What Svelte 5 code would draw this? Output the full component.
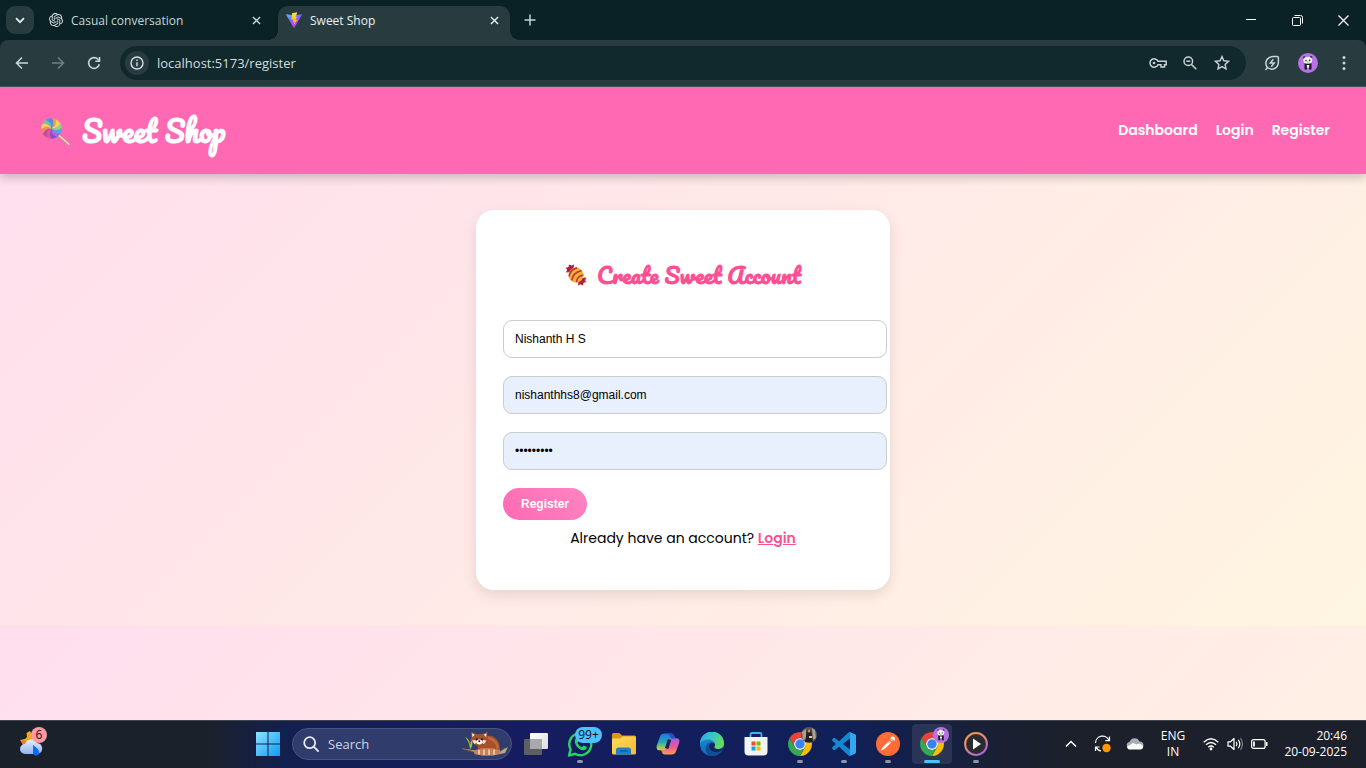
<script>
  let name = $state('Nishanth H S');
  let email = $state('nishanthhs8@gmail.com');
  let password = $state('sweetshop');
  let address = $state('localhost:5173/register');
  let query = $state('');

  const petals = ['#f0a04b', '#f7d65a', '#8fd48a', '#4aa8e8', '#a06be0', '#7d4fd0', '#e0559a', '#c04a9c', '#f08a5a', '#f7cf5a', '#6cc6a0', '#4a90e8'];
  const openai =
    'M22.28 9.82a5.98 5.98 0 0 0-.51-4.91 6.05 6.05 0 0 0-6.51-2.9A6.07 6.07 0 0 0 4.98 4.18a5.98 5.98 0 0 0-4 2.9 6.05 6.05 0 0 0 .74 7.1 5.98 5.98 0 0 0 .51 4.91 6.05 6.05 0 0 0 6.52 2.9A5.98 5.98 0 0 0 13.26 24a6.06 6.06 0 0 0 5.77-4.21 5.99 5.99 0 0 0 4-2.9 6.06 6.06 0 0 0-.75-7.07zm-9.02 12.61a4.48 4.48 0 0 1-2.88-1.04l.14-.08 4.78-2.76a.8.8 0 0 0 .4-.68v-6.74l2.02 1.17a.07.07 0 0 1 .04.05v5.58a4.5 4.5 0 0 1-4.5 4.5zM3.6 18.3a4.47 4.47 0 0 1-.53-3.01l.14.08 4.78 2.76a.77.77 0 0 0 .78 0l5.85-3.37v2.33a.08.08 0 0 1-.03.06L9.74 19.95A4.5 4.5 0 0 1 3.6 18.3zM2.34 7.9a4.49 4.49 0 0 1 2.37-1.98V11.6a.77.77 0 0 0 .38.68l5.82 3.35-2.02 1.17a.08.08 0 0 1-.07 0l-4.83-2.79A4.5 4.5 0 0 1 2.34 7.87zm16.6 3.85L13.1 8.36l2.02-1.16a.08.08 0 0 1 .07 0l4.83 2.79a4.49 4.49 0 0 1-.68 8.1v-5.67a.79.79 0 0 0-.4-.67zm2-3.02-.14-.09-4.77-2.78a.78.78 0 0 0-.79 0L9.41 9.23V6.9a.07.07 0 0 1 .03-.06l4.83-2.79a4.5 4.5 0 0 1 6.68 4.66zM8.31 12.86l-2.02-1.16a.08.08 0 0 1-.04-.06V6.07a4.5 4.5 0 0 1 7.37-3.45l-.14.08L8.7 5.46a.79.79 0 0 0-.39.68zm1.1-2.36 2.6-1.5 2.6 1.5v3l-2.6 1.5-2.6-1.5Z';
</script>

{#snippet chrome()}
  <svg width="24" height="24" viewBox="0 0 48 48">
    <circle cx="24" cy="24" r="12" fill="#fff" />
    <path fill="#ea4335" d="M24 12H44.78a24 24 0 0 0-41.56 0L13.61 30A11.99 11.99 0 0 1 24 12Z" />
    <path fill="#fbbc04" d="M34.39 30 24 48A24 24 0 0 0 44.78 12H24A11.99 11.99 0 0 1 34.39 30Z" />
    <path fill="#34a853" d="M13.61 30 3.22 12A24 24 0 0 0 24 48L34.39 30A11.99 11.99 0 0 1 13.61 30Z" />
    <circle cx="24" cy="24" r="9.500" fill="#3b82f0" />
  </svg>
{/snippet}

{#snippet panda(size)}
  <svg width={size} height={size} viewBox="0 0 20 20">
    <circle cx="10" cy="10" r="10" fill="#b872e8" />
    <path d="M6.500 10.500q3.500-1.500 7 0v6h-2.500v-2.500h-2v2.500h-2.500z" fill="#1b1b20" />
    <path d="M8.800 12h2.400v2.500h-2.400z" fill="#f4f4f4" />
    <circle cx="6.300" cy="4.400" r="1.200" fill="#333" /><circle cx="13.200" cy="4.100" r="1.200" fill="#333" />
    <ellipse cx="9.800" cy="7.200" rx="4.400" ry="3.500" fill="#f2f2f2" />
    <circle cx="8" cy="7.600" r=".8" fill="#333" /><circle cx="11.700" cy="7.400" r=".8" fill="#333" />
    <circle cx="9.900" cy="9" r=".5" fill="#333" />
  </svg>
{/snippet}

{#snippet cross(size)}
  <svg width={size} height={size} viewBox="0 0 10 10" fill="none" stroke="currentColor" stroke-width="1.500"><path d="M1 1l8 8M9 1L1 9" /></svg>
{/snippet}

<div class="screen">
  <div class="tabstrip">
    <button class="tabsearch" aria-label="Search tabs">
      <svg width="10" height="7" viewBox="0 0 10 7" fill="none" stroke="#e3eeee" stroke-width="1.800"><path d="M1 1.200l4 4 4-4" /></svg>
    </button>
    <div class="tab">
      <svg width="14" height="14" viewBox="0 0 24 24" fill="#dce6e6"><path d={openai} /></svg>
      <span>Casual conversation</span>
      <button aria-label="Close tab">{@render cross(9)}</button>
    </div>
    <div class="tab active">
      <svg width="16" height="16" viewBox="0 0 32 32">
        <defs>
          <linearGradient id="vite" x1="0" y1="0" x2=".6" y2="1"><stop stop-color="#41d1ff" /><stop offset=".4" stop-color="#7a6cff" /><stop offset="1" stop-color="#c834fe" /></linearGradient>
          <linearGradient id="bolt" x1="0" y1="0" x2="0" y2="1"><stop stop-color="#ffe04a" /><stop offset="1" stop-color="#ffa800" /></linearGradient>
        </defs>
        <path d="M1 4.500 15 7l16-2.500q1 .3.500 1.500L17 31q-1 1.500-2 0L.5 6Q0 4.800 1 4.500z" fill="url(#vite)" />
        <path d="M22.500.5 12 2.500l-1 13 4-.8-1.500 6 3.500-1-2 7.500L23 15l-4 .8 3-6.300-2.500.5z" fill="url(#bolt)" />
      </svg>
      <span>Sweet Shop</span>
      <button aria-label="Close tab">{@render cross(9)}</button>
    </div>
    <button class="newtab" aria-label="New tab">
      <svg width="12" height="12" viewBox="0 0 12 12" fill="none" stroke="#c3d3d4" stroke-width="1.500"><path d="M6 .5v11M.5 6h11" /></svg>
    </button>
    <div class="window">
      <button aria-label="Minimise"><svg width="10" height="10" viewBox="0 0 10 10" stroke="#fff"><path d="M0 4.500h10" /></svg></button>
      <button aria-label="Restore"><svg width="11" height="11" viewBox="0 0 11 11" fill="none" stroke="#fff"><rect x=".5" y="2.500" width="8" height="8" rx="1" /><path d="M2.500.5h6a2 2 0 0 1 2 2v6" /></svg></button>
      <button aria-label="Close"><svg width="11" height="11" viewBox="0 0 11 11" stroke="#fff" stroke-width="1.200"><path d="M.5.5l10 10M10.500.5l-10 10" /></svg></button>
    </div>
  </div>

  <div class="toolwrap">
    <div class="toolbar">
      <button aria-label="Back"><svg width="16" height="16" viewBox="0 0 16 16" fill="none" stroke="#c6d6d8" stroke-width="1.600"><path d="M14 8H3M8 2.500 2.500 8 8 13.500" /></svg></button>
      <button aria-label="Forward"><svg width="16" height="16" viewBox="0 0 16 16" fill="none" stroke="#6d7f83" stroke-width="1.600"><path d="M2 8h11M8 2.500 13.500 8 8 13.500" /></svg></button>
      <button aria-label="Reload"><svg width="16" height="16" viewBox="0 0 16 16" fill="none" stroke="#c6d6d8" stroke-width="1.600"><path d="M13.300 9.300A5.400 5.400 0 1 1 12 4.300L13.500 6" /><path d="M13.500 2v4.200H9.300" /></svg></button>
      <div class="omnibox">
        <button class="info" aria-label="Site information"><svg width="14" height="14" viewBox="0 0 14 14" fill="none" stroke="#d5dfe0" stroke-width="1.400"><circle cx="7" cy="7" r="6" /><path d="M7 6.200v4M7 3.600v1.400" /></svg></button>
        <input aria-label="Address" bind:value={address} spellcheck="false" />
        <button aria-label="Passwords"><svg width="18" height="12" viewBox="0 0 18 12" fill="none" stroke="#c6d3d4" stroke-width="1.500"><path d="M9 4.300A4.200 4.200 0 1 0 9 7.700h3V10h3.500V7.700h1.700V4.300z" /><circle cx="5" cy="6" r="1.300" fill="#c6d3d4" stroke="none" /></svg></button>
        <button aria-label="Zoom"><svg width="14" height="14" viewBox="0 0 14 14" fill="none" stroke="#c6d3d4" stroke-width="1.500"><circle cx="5.300" cy="5.300" r="4.300" /><path d="M8.500 8.500 13.300 13.300M3.300 5.300h4" /></svg></button>
        <button aria-label="Bookmark"><svg width="16" height="16" viewBox="0 0 16 16" fill="none" stroke="#c6d3d4" stroke-width="1.400"><path d="M8 1.600l1.900 4.200 4.600.5-3.400 3.100.9 4.500L8 11.600l-4 2.300.9-4.500L1.500 6.300l4.600-.5z" /></svg></button>
      </div>
      <button aria-label="Performance"><svg width="16" height="16" viewBox="0 0 16 16" fill="none" stroke="#c6d6d8" stroke-width="1.500"><path d="M1.500 15 3.500 12.500M3.500 12.500C-.2 8 2.800 1.700 9 1.600h4.200q1.200 0 1.200 1.200V7c0 6.500-6.500 9-10.900 5.500z" /><path d="M9.300 4.300 6.300 8h3.900L7.200 11.700" /></svg></button>
      <button aria-label="Profile">{@render panda(20)}</button>
      <button aria-label="Menu"><svg width="4" height="16" viewBox="0 0 4 16" fill="#c6d6d8"><circle cx="2" cy="2.500" r="1.500" /><circle cx="2" cy="8" r="1.500" /><circle cx="2" cy="13.500" r="1.500" /></svg></button>
    </div>
  </div>

  <div class="page">
    <header>
      <h1>
        <svg width="30" height="32" viewBox="-1 -3 30 32">
          <path d="M18 18l10 8.700" stroke="#b9957c" stroke-width="2.600" stroke-linecap="round" />
          <path d="M18 17.500l10 8.700" stroke="#f3dcc0" stroke-width="1.500" stroke-linecap="round" />
          {#each petals as fill, i}
            <path d="M10.500 10.500Q14.500 6 10.500.6Q13.500.6 15.700 2Q16.500 6 10.500 10.500z" {fill} stroke={fill} stroke-width=".6" transform="rotate({i * 30} 10.500 10.500)" />
          {/each}
        </svg>
        Sweet Shop
      </h1>
      <nav>
        <a href="#dashboard">Dashboard</a>
        <a href="#login">Login</a>
        <a href="#register">Register</a>
      </nav>
    </header>
    <main>
      <section class="card">
        <h2>
          <svg width="22" height="22" viewBox="0 0 22 22">
            <path d="M6 8 1 8.500 2.200 5.500.5 4 3.500 3 4 .5 6.500 1.500 9 .5 8.500 5z" fill="#b01e44" />
            <path d="M16 14l5.500-.5-1.500 3 1.500 1.500-3 .8-.6 2.700-2.400-1.200-2.500 1.200.5-5z" fill="#b01e44" />
            <circle cx="11" cy="11" r="7.500" fill="#f0b52e" />
            <path d="M4.200 12.500Q5 5.500 12 3.900M7 16.500Q7.500 8.500 16.500 6.800M11.500 18.300Q11.500 12.500 18.400 11" fill="none" stroke="#c92d4c" stroke-width="1.600" />
          </svg>
          Create Sweet Account
        </h2>
        <form onsubmit={(e) => e.preventDefault()}>
          <input type="text" aria-label="Name" bind:value={name} />
          <input class="filled" type="email" aria-label="Email" bind:value={email} />
          <input class="filled" type="password" aria-label="Password" bind:value={password} />
          <button type="submit">Register</button>
        </form>
        <p>Already have an account? <a href="#login">Login</a></p>
      </section>
    </main>
  </div>

  <footer class="taskbar">
    <div class="widgets">
      <button aria-label="Weather">
        <svg width="26" height="26" viewBox="0 0 26 26">
          <defs><linearGradient id="cloud" x1="0" y1="0" x2="0" y2="1"><stop stop-color="#e6efff" /><stop offset="1" stop-color="#91b4ee" /></linearGradient></defs>
          <path d="M11 0l3 5 6 2-5 8-8-1-6-5 5-1 2-2-.5-4z" fill="#f5a623" /><path d="M1 9l6 1 5 3-8 1z" fill="#f07c1a" />
          <path d="M6 23a5 5 0 0 1 0-10 6.500 6.500 0 0 1 12-1 5.600 5.600 0 0 1 1 11z" fill="url(#cloud)" />
          <path d="M14 14q6 4 6 7a3 3 0 0 1-6 1z" fill="#0a6cff" />
        </svg>
        <span class="badge alert">6</span>
      </button>
    </div>

    <div class="apps">
      <button aria-label="Start">
        <svg width="24" height="24" viewBox="0 0 24 24">
          <defs><linearGradient id="win" x1="0" y1="0" x2="1" y2="1"><stop stop-color="#8fe3ff" /><stop offset="1" stop-color="#0c9bf5" /></linearGradient></defs>
          <path fill="url(#win)" d="M0 0h11.500v11.500H0zM12.500 0H24v11.500H12.500zM0 12.500h11.500V24H0zM12.500 12.500H24V24H12.500z" />
        </svg>
      </button>
      <label class="search">
        <svg width="16" height="16" viewBox="0 0 16 16" fill="none" stroke="#e4e9f4" stroke-width="1.800"><circle cx="6.700" cy="6.700" r="5.500" /><path d="M10.700 10.700 15 15" stroke-linecap="round" /></svg>
        <input placeholder="Search" aria-label="Search" bind:value={query} />
        <svg width="48" height="26" viewBox="0 0 48 26">
          <path d="M1 17.500l14 2 20 3 12-6.500-3 6-12 2.500H20l-7-4z" fill="#bca78c" />
          <path d="M1 17.500l15 4M44 17l-8 6" stroke="#8c7058" fill="none" />
          <path d="M9 17.500Q8 10 4 6 9 8 9 14L10.500 7q2 6-.5 10.500z" fill="#a4c037" />
          <path d="M17 18Q15 7 24 5.500c9-3 15 4 15 14H18z" fill="#a8502b" />
          <path d="M27 6.500q9 3 10 11" fill="none" stroke="#c2683d" stroke-width="2.500" />
          <path d="M13 19.500q12-4.500 26-.5l.5 3Q27 25.500 15 23.500q-3-1-2-4z" fill="#c98059" />
          <path d="M18 19v4.500M23 18.500v5.500M28 18.500v5.500M33 18.500v5" stroke="#e9c9ab" stroke-width="1.800" />
          <path d="M10 1l5 2h6.500l5-2-.5 6 1 2-3.500 4.500q-5 2.500-10 0L9.500 9l1-2z" fill="#a3502c" />
          <path d="M11 2.200l2.800 1.500-2.500 2.500zM25.500 2.200l-2.800 1.500 2.500 2.500z" fill="#f4e4d2" />
          <path d="M11 9.500l3.500-.5 1 3-2 1zM25.500 9.500 22 9l-1 3 2 1z" fill="#f4e4d2" />
          <ellipse cx="18.300" cy="11" rx="3" ry="2.400" fill="#fff" />
          <circle cx="15.800" cy="8.200" r="1" fill="#17110f" /><circle cx="20.800" cy="8.200" r="1" fill="#17110f" /><circle cx="18.300" cy="10.200" r="1" fill="#17110f" />
        </svg>
      </label>
      <button aria-label="Task view">
        <svg width="24" height="24" viewBox="0 0 24 24">
          <defs><linearGradient id="tv" x1="0" y1="0" x2="1" y2="1"><stop stop-color="#fff" /><stop offset="1" stop-color="#dcdcdc" /></linearGradient></defs>
          <rect x="6" y="1" width="18" height="16" rx="1" fill="url(#tv)" /><rect x="0" y="7" width="18" height="16" rx="1" fill="#666" fill-opacity=".9" /><path d="M6 7h12v10H6z" fill="#a9a9a9" />
        </svg>
      </button>
      <button class="running" aria-label="WhatsApp">
        <svg width="26" height="26" viewBox="0 0 26 26" fill="none">
          <path d="M2 24.500 3.600 18.500A11 11 0 1 1 7.800 22.800z" stroke="#25d366" stroke-width="2.400" stroke-linejoin="round" />
          <path d="M8 8.500c1-2 2.500-1.500 2.800-.5l.9 2.200-1.300 1.800q1.500 3 4.600 4.200l1.500-1.800 3 1.400c.7.300.3 3-2.500 3.500-4 .5-10.500-5-9-10.800z" fill="#25d366" />
        </svg>
        <span class="badge count">99+</span>
      </button>
      <button aria-label="File Explorer">
        <svg width="24" height="24" viewBox="0 0 24 24">
          <defs><linearGradient id="fold" x1="0" y1="0" x2="1" y2="1"><stop stop-color="#ffdc63" /><stop offset="1" stop-color="#f9b82c" /></linearGradient></defs>
          <path d="M0 2.500Q0 1 1.500 1h6L10 3.500h12.500Q24 3.500 24 5v6H0z" fill="#d99a10" />
          <path d="M0 6.500h8l2.500-2H23a1 1 0 0 1 1 1V21a1.500 1.500 0 0 1-1.500 1.500h-21A1.500 1.500 0 0 1 0 21z" fill="url(#fold)" />
          <path d="M4 22.500V18a2.500 2.500 0 0 1 2.500-2.500h10A2.500 2.500 0 0 1 19 18v4.500z" fill="#1f80c9" /><path d="M8 19h7.500" stroke="#0b5f9f" stroke-width="1.500" />
        </svg>
      </button>
      <button aria-label="Copilot">
        <svg width="24" height="24" viewBox="0 0 24 24">
          <defs>
            <linearGradient id="cpa" x1="0" y1="0" x2="0" y2="1"><stop stop-color="#2474e8" /><stop offset=".5" stop-color="#23a8b8" /><stop offset="1" stop-color="#d8d43a" /></linearGradient>
            <linearGradient id="cpb" x1="0" y1="0" x2="0" y2="1"><stop stop-color="#a45bf0" /><stop offset=".55" stop-color="#f0588e" /><stop offset="1" stop-color="#ffa04a" /></linearGradient>
          </defs>
          <path d="M8.500 1.500H15q2.500 0 3.200 2.500l.8 2.500h-3q-2 0-2.800 2.500L11 16q-.8 2.300-3 2.300H3.500C.8 18.300.2 16 .8 13.500L4 4.500q1-3 4.500-3z" fill="url(#cpa)" />
          <path d="M15.500 22.500H9q-2.500 0-3.200-2.500L5 17.800h3q2 0 2.800-2.500L13 8.500q.8-2.300 3-2.300h4.500c2.700 0 3.300 2.300 2.700 4.500L20 19.500q-1 3-4.500 3z" fill="url(#cpb)" />
          <path d="M13.600 7.500 10.600 16.500" stroke="#15235c" stroke-width="3.500" />
          <path d="M12 1.500h3q2.500 0 3.200 2.500l.8 2.500h-3q-1.500-.2-2-2z" fill="#2950bd" />
        </svg>
      </button>
      <button aria-label="Edge">
        <svg width="24" height="24" viewBox="0 0 24 24">
          <defs>
            <linearGradient id="ea" x1="0" y1="0" x2="1" y2=".4"><stop stop-color="#2ca6e0" /><stop offset=".55" stop-color="#37c6c9" /><stop offset="1" stop-color="#62dd59" /></linearGradient>
            <linearGradient id="eb" x1="0" y1="0" x2="0" y2="1"><stop stop-color="#1c91d8" /><stop offset="1" stop-color="#1268b4" /></linearGradient>
          </defs>
          <circle cx="12" cy="12" r="12" fill="url(#eb)" />
          <path d="M0 11.500A12 12 0 0 1 24 11.500c0 4-3.300 5.500-6.500 5.500-3.500 0-4-1.500-3-2.700C17 10 11 7 7.500 7.500 4 7.800 1 9.500 0 11.500z" fill="url(#ea)" />
          <path d="M8.700 13.500C8.500 20 16 22.500 21.500 18.700A12 12 0 0 1 11 24C5 22.500 3.500 14 9.500 10z" fill="#104f96" />
          <path d="M14.800 13.800c-1.500 1.700.5 3.400 3.500 3.400 2 0 4-.7 5-2.200q-.5 2.500-1.800 3.700C16 22 8.500 19.500 9 13.500q.6-3 3-3c2.500.3 3.700 1.800 2.800 3.300z" fill="#13245f" />
        </svg>
      </button>
      <button aria-label="Microsoft Store">
        <svg width="24" height="26" viewBox="0 0 24 26">
          <path d="M6.500 7V3.500Q6.500 2 8 2h8q1.500 0 1.500 1.500V7" fill="none" stroke="#36b5ee" stroke-width="1.800" />
          <path d="M.5 6h23v14.500a4 4 0 0 1-4 4h-15a4 4 0 0 1-4-4z" fill="#f2f3f5" />
          <path d="M7.500 10.500h4v4h-4z" fill="#f25022" /><path d="M12.500 10.500h4v4h-4z" fill="#7fba00" /><path d="M7.500 15.500h4v4h-4z" fill="#00a4ef" /><path d="M12.500 15.500h4v4h-4z" fill="#ffb900" />
        </svg>
      </button>
      <button class="running" aria-label="Chrome">
        {@render chrome()}
        <span class="badge face">
          <svg width="16" height="16" viewBox="0 0 16 16"><circle cx="8" cy="8" r="8" fill="#5f564e" /><path d="M1 5l4-3v10l-3 1zM11 1l3 2 1 8-3 2z" fill="#a8a092" /><path d="M6 3h4l2 12H4z" fill="#211d1e" /><circle cx="8" cy="4" r="1.500" fill="#b88a70" /><path d="M8 9h3v2H8z" fill="#d8ccd0" /></svg>
        </span>
      </button>
      <button class="running" aria-label="Visual Studio Code">
        <svg width="24" height="24" viewBox="0 0 24 24">
          <path fill="#1788cf" d="M23.150 2.590 18.210.21a1.490 1.490 0 0 0-1.700.29l-9.460 8.630-4.120-3.130a1 1 0 0 0-1.280.06L.33 7.260a1 1 0 0 0 0 1.480L3.900 12 .33 15.260a1 1 0 0 0 0 1.480l1.320 1.200a1 1 0 0 0 1.280.06l4.120-3.130 9.460 8.630a1.490 1.490 0 0 0 1.700.29l4.940-2.380A1.500 1.500 0 0 0 24 20.060V3.940a1.500 1.500 0 0 0-.85-1.350zM18 17.450 10.830 12 18 6.550z" />
          <path fill="#35a7f0" d="M18 .2l5.200 2.400q.8.400.8 1.300V20q0 1-.8 1.400L18 23.800z" />
        </svg>
      </button>
      <button class="running" aria-label="Postman">
        <svg width="24" height="24" viewBox="0 0 24 24">
          <circle cx="12" cy="12" r="12" fill="#ff6c37" />
          <path d="M13.500 8.800 7 14.800l-2.200 4 4.200-2 6-6z" fill="#fff" /><circle cx="16.800" cy="6.900" r="2.300" fill="#fff" /><path d="M12 10l2.500 1.500M7 14.800l2 2" stroke="#ff6c37" stroke-width=".6" fill="none" /><path d="M15.500 7.500l2.500 1" stroke="#ff6c37" />
        </svg>
      </button>
      <button class="running current" aria-label="Chrome, Sweet Shop">
        {@render chrome()}
        <span class="badge face">{@render panda(16)}</span>
      </button>
      <button class="running" aria-label="Media Player">
        <svg width="24" height="24" viewBox="0 0 24 24">
          <defs><linearGradient id="mp" x1="0" y1="0" x2=".6" y2="1"><stop stop-color="#f79a3c" /><stop offset=".5" stop-color="#e88c7a" /><stop offset="1" stop-color="#a868d8" /></linearGradient></defs>
          <circle cx="12" cy="12" r="10.900" fill="#2b2b31" stroke="url(#mp)" stroke-width="2" /><path d="M9 6.500v11l8-5.500z" fill="#fff" />
        </svg>
      </button>
    </div>

    <div class="tray">
      <button aria-label="Hidden icons"><svg width="12" height="8" viewBox="0 0 12 8" fill="none" stroke="#fff" stroke-width="1.500"><path d="M1 6.500l5-5 5 5" /></svg></button>
      <button aria-label="Updates">
        <svg width="18" height="18" viewBox="0 0 18 18" fill="none" stroke="#fff" stroke-width="1.200"><path d="M1.500 8A7 7 0 0 1 15 5.500M15.500 1.500v4.200h-4.200M1.500 16v-4h4M2 12q1.500 3.500 5 4" /><circle cx="12.500" cy="13" r="4.200" fill="#ff9800" stroke="none" /></svg>
      </button>
      <button aria-label="OneDrive"><svg width="18" height="12" viewBox="0 0 18 12"><path d="M4 11a3.700 3.700 0 0 1-.3-7.300A5.200 5.200 0 0 1 13.500 3.500a3.800 3.800 0 0 1 1 7.500z" fill="#a9adb2" /><path d="M3.500 11.500Q1 11 1.200 8.500l6-3.500 3.300 1.500q3-1.500 5 0 2 1 1.500 3-.5 2-2.500 2z" fill="#fff" /></svg></button>
      <button class="lang">ENG<br />IN</button>
      <button class="status" aria-label="Network, volume and battery">
        <svg width="16" height="14" viewBox="0 0 16 14" fill="none" stroke="#fff" stroke-width="1.300"><path d="M.7 5.200q7.300-7 14.600 0M3 7.800q5-4.600 10 0M5.300 10.200q2.700-2.400 5.400 0" /><circle cx="8" cy="12" r="1.400" fill="#fff" stroke="none" /></svg>
        <svg width="16" height="14" viewBox="0 0 16 14" fill="none" stroke="#fff" stroke-width="1.200"><path d="M1 4.800h2.500L7 1.500v11L3.500 9.200H1z" stroke-linejoin="round" /><path d="M9.200 4.800q1.500 2.200 0 4.400M11.300 2.800q3 4.200 0 8.400" /><path d="M13.500 1q3.800 6 0 12" stroke="#777d87" /></svg>
        <svg width="17" height="10" viewBox="0 0 17 10" fill="none" stroke="#fff" stroke-width="1.200"><rect x=".6" y=".6" width="13.500" height="8.800" rx="2" /><path d="M3 2.500v5" stroke-width="1.800" /><path d="M15.700 3v4" stroke-width="1.600" /></svg>
      </button>
      <button class="clock">20:46<br />20-09-2025</button>
    </div>
  </footer>
</div>

<style>
  :global(body) { margin: 0; }
  * { box-sizing: border-box; }
  svg { display: block; flex: none; }
  button { display: flex; align-items: center; justify-content: center; padding: 0; border: 0; background: none; color: inherit; font: inherit; }
  .screen { display: flex; flex-direction: column; min-height: 100vh; font-family: "Segoe UI", "Open Sans", "Noto Sans", sans-serif; }

  .tabstrip { display: flex; align-items: flex-end; height: 40px; padding-left: 6px; background: #0a2226; color: #c5d6d8; font-size: 12px; }
  .tabsearch { width: 28px; height: 28px; margin-bottom: 6px; border-radius: 9px; background: #283c40; }
  .tab { position: relative; display: flex; align-items: center; gap: 8px; height: 34px; width: 232px; margin-left: 6px; padding: 0 8px 6px; }
  .tab span { flex: 1; white-space: nowrap; }
  .tab button { width: 16px; height: 16px; }
  .tab:first-of-type { padding-left: 9px; }
  .tab.active { background: #283c40; color: #e8f0f0; border-radius: 10px 10px 0 0; }
  .tab.active::before, .tab.active::after { content: ""; position: absolute; bottom: 0; width: 10px; height: 10px; }
  .tab.active::before { left: -10px; background: radial-gradient(circle at 0 0, transparent 10px, #283c40 10px); }
  .tab.active::after { right: -10px; background: radial-gradient(circle at 100% 0, transparent 10px, #283c40 10px); }
  .newtab { width: 28px; height: 28px; margin: 0 0 6px 6px; }
  .window { display: flex; align-self: stretch; margin-left: auto; }
  .window button { width: 46px; }

  .toolwrap { background: #0a2226; }
  .toolbar { display: flex; align-items: center; gap: 8px; height: 47px; padding: 0 8px; border-bottom: 1px solid #46575a; border-radius: 8px 8px 0 0; background: #283c40; }
  .toolbar button { width: 28px; height: 28px; }
  .omnibox { flex: 1; display: flex; align-items: center; gap: 8px; height: 34px; margin: 0 4px; padding: 0 12px 0 5px; border-radius: 17px; background: #11282c; }
  .omnibox button { width: 24px; height: 24px; }
  .omnibox .info { border-radius: 50%; background: #283c40; }
  .omnibox input { flex: 1; min-width: 0; padding: 0; border: 0; outline: 0; background: none; color: #d3dedf; font: 13px "Segoe UI", "Open Sans", "Noto Sans", sans-serif; }

  .page { flex: 1; background: linear-gradient(135deg, #ffdeee, #fff5e1) 0 0 / 100% 539px; font-family: Poppins, Inter, sans-serif; font-size: 14px; color: #000; }
  header { display: flex; align-items: center; justify-content: space-between; height: 87px; padding: 0 36px 0 40px; background: #ff69b4; box-shadow: 0 4px 9px rgba(0, 0, 0, 0.2); color: #fff; }
  h1, h2 { display: flex; align-items: center; margin: 0; font-family: Pacifico, Lato, cursive; font-weight: 700; }
  h1 { gap: 12px; font-size: 29px; }
  nav { display: flex; gap: 18px; }
  nav a { color: #fff; font-weight: 600; text-decoration: none; }
  main { display: flex; justify-content: center; padding: 36px; }
  .card { width: 100%; max-width: 414px; padding: 27px; border-radius: 18px; background: #fff; box-shadow: 0 5px 14px rgba(0, 0, 0, 0.1); }
  h2 { justify-content: center; gap: 10px; margin: 20px 0 27px; line-height: 36px; font-size: 22px; color: #ff4f93; }
  form { display: flex; flex-direction: column; align-items: flex-start; gap: 18px; }
  form input { box-sizing: content-box; width: 100%; height: 36px; padding: 0 11px; border: 1px solid #ccc; border-radius: 9px; background: #fff; color: #000; font: 12px Arial, "Liberation Sans", sans-serif; }
  form input.filled { background: #e8f0fe; }
  form button { height: 32px; padding: 0 18px; border-radius: 18px; background: linear-gradient(45deg, #ff69b4, #ff85c1); color: #fff; font: bold 12px Arial, "Liberation Sans", sans-serif; }
  p { margin: 7px 0 14px; line-height: 22px; text-align: center; }
  p a { color: #ff4f93; font-weight: 600; }

  .taskbar { display: grid; grid-template-columns: 248fr auto 370fr; align-items: center; height: 48px; box-shadow: inset 0 1px #40454f; background: linear-gradient(90deg, #1b212b 0, #1b212b 15%, #13204f 21%, #161c60 38%, #102058 62%, #1a2033 73%, #1b202b 78%); color: #fff; }
  .widgets { padding-left: 12px; }
  .widgets button, .apps button { position: relative; width: 40px; height: 40px; }
  .apps { display: flex; gap: 4px; }
  .badge { position: absolute; display: flex; align-items: center; justify-content: center; height: 16px; border-radius: 8px; color: #111; font-size: 12px; line-height: 16px; }
  .alert { top: 3px; right: 5px; width: 16px; background: #ff99a4; }
  .count { top: 3px; left: 15px; width: 27px; background: #4cc2ff; }
  .face { top: 3px; right: 3px; }
  .apps .running::after { content: ""; position: absolute; bottom: 1px; width: 6px; height: 3px; border-radius: 2px; background: #8f95ab; }
  .apps .current { border-radius: 4px; background: rgba(255, 255, 255, 0.09); }
  .apps .current::after { width: 16px; background: #4cc2ff; }
  .search { display: flex; align-items: center; align-self: center; gap: 9px; width: 220px; height: 32px; padding: 0 2px 0 10px; border: 1px solid #48547f; border-radius: 16px; background: #303c6c; }
  .search input { flex: 1; min-width: 0; padding: 0; border: 0; outline: 0; background: none; color: #fff; font: 13px "Segoe UI", "Open Sans", "Noto Sans", sans-serif; }
  .search input::placeholder { color: #cfd5e6; opacity: 1; }
  .tray { display: flex; align-items: center; justify-content: flex-end; padding-right: 19px; font-size: 12px; line-height: 16px; }
  .tray button { min-width: 32px; height: 40px; }
  .tray .lang { width: 44px; text-align: center; }
  .tray .status { gap: 8px; padding: 0 8px; }
  .tray .clock { justify-content: flex-end; min-width: 71px; text-align: right; }
</style>
